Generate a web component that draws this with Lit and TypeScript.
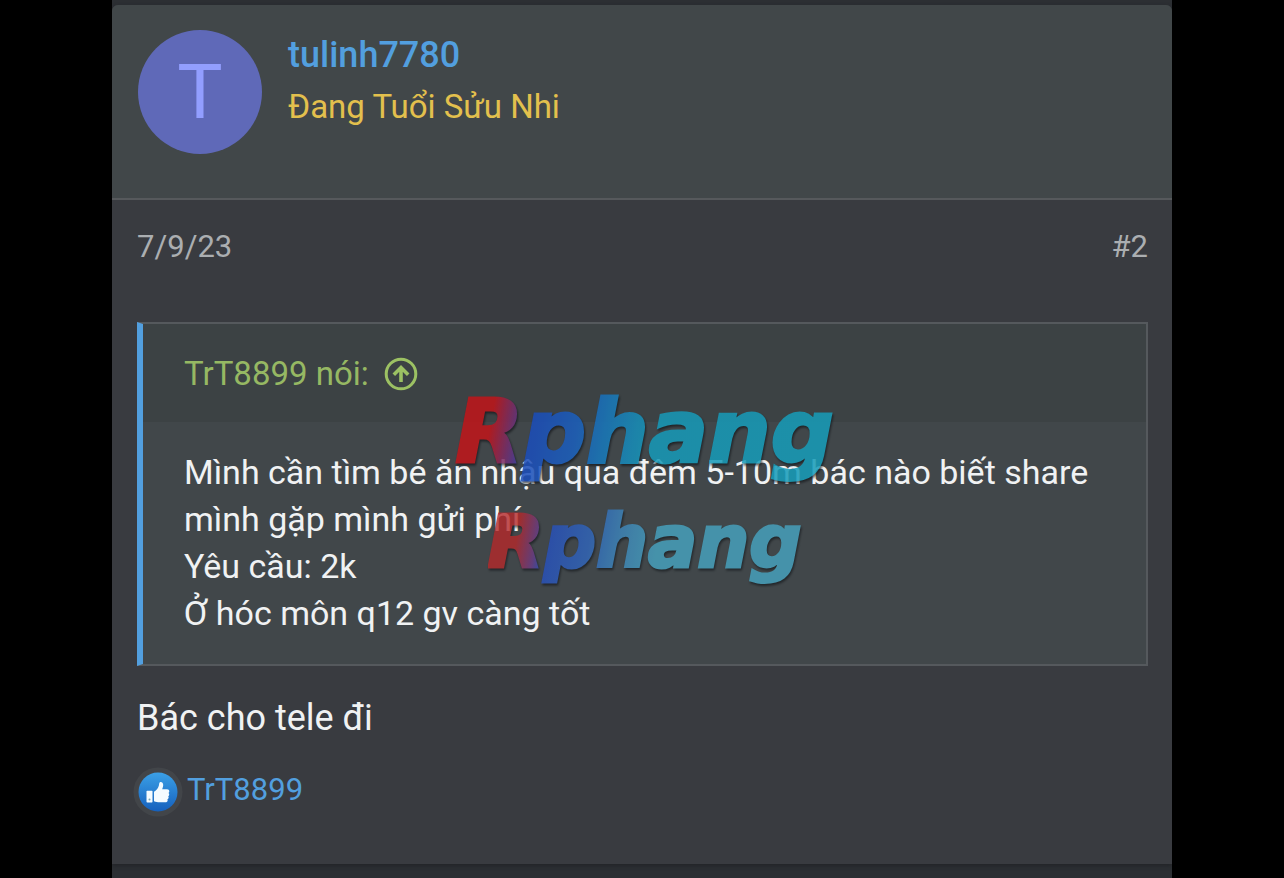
import { LitElement, html, css } from "lit";
import { customElement, property } from "lit/decorators.js";

@customElement("like-badge")
class LikeBadge extends LitElement {
  static styles = css`
    :host {
      display: block;
      width: 50px;
      height: 50px;
      flex: none;
    }
    .icon {
      display: block;
      width: 100%;
      height: 100%;
    }
  `;

  render() {
    return html`
      <svg class="icon" viewBox="0 0 50 50" role="img" aria-label="Like">
        <defs>
          <linearGradient id="fill" x1="0" y1="0" x2="0" y2="1">
            <stop offset="0" stop-color="#3ba0e6" />
            <stop offset="1" stop-color="#1560bd" />
          </linearGradient>
        </defs>
        <circle cx="25" cy="25" r="24.5" fill="#424549" />
        <circle cx="25" cy="25" r="19.5" fill="url(#fill)" />
        <path
          fill="#f4fbff"
          d="M14.2 23.8h4.6c.4 0 .7.3.7.7v10.2c0 .4-.3.7-.7.7h-4.6c-.4 0-.7-.3-.7-.7V24.5c0-.4.3-.7.7-.7z"
        />
        <path
          fill="#f4fbff"
          d="M21 24.8c2.600-1.500 4.300-3.600 4.900-6.200.3-1.500.2-3.100 1.400-3.500 1.400-.4 2.900.9 2.900 3 0 1.500-.6 2.900-1 4.100h4.900c1.300 0 2.200.9 2.200 2 0 .8-.3 1.400-.8 1.800.6.4.8 1 .7 1.700-.1.700-.5 1.200-1 1.500.4.500.5 1 .4 1.600-.1.700-.6 1.200-1.200 1.500.3.500.3 1 .2 1.500-.3 1-1.200 1.500-2.400 1.500h-5.700c-2 0-3.500-.3-5.500-1z"
        />
        <circle cx="16.5" cy="32.6" r="1" fill="#7ba7b5" />
      </svg>
    `;
  }
}

@customElement("brand-mark")
class BrandMark extends LitElement {
  @property({ reflect: true }) size = "large";

  static styles = css`
    :host {
      display: block;
      filter: drop-shadow(1px 2px 1px rgba(15, 18, 22, 0.75));
      opacity: 0.86;
    }
    :host([size="small"]) {
      opacity: 0.8;
    }
    .word {
      display: block;
      font: italic bold 88px/110px "DejaVu Sans", sans-serif;
      color: transparent;
      -webkit-text-stroke: 3px transparent;
      background: linear-gradient(
        100deg,
        #c0151a 0%,
        #c0151a 11%,
        #5c3585 18%,
        #1b4cba 21%,
        #1b60bd 33%,
        #1878bb 40%,
        #1799b8 52%,
        #179db9 100%
      );
      -webkit-background-clip: text;
      background-clip: text;
    }
    :host([size="small"]) .word {
      font-size: 73px;
      line-height: 92px;
      background-image: linear-gradient(
        100deg,
        #b5292a 0%,
        #b5292a 11%,
        #6a3c86 17%,
        #2750bf 20%,
        #3066bd 33%,
        #3d86bd 42%,
        #47a5c2 54%,
        #47a5c2 100%
      );
    }
  `;

  render() {
    return html`<span class="word">Rphang</span>`;
  }
}

@customElement("quote-block")
class QuoteBlock extends LitElement {
  @property() author = "";
  @property({ attribute: false }) lines: string[] = [];

  static styles = css`
    :host {
      display: block;
    }
    .quote {
      position: relative;
      margin: 0;
      border: 2px solid #55595d;
      border-left: 6px solid #529fdf;
      background: #41474a;
    }
    .head {
      display: flex;
      align-items: center;
      padding: 26px 41px 24px;
      background: #3c4244;
      color: #96b863;
      font-size: 33px;
      line-height: 48px;
    }
    .source {
      display: flex;
      align-items: center;
      gap: 15px;
      color: inherit;
      text-decoration: none;
    }
    .arrow {
      display: block;
      width: 34px;
      height: 34px;
    }
    .body {
      padding: 27px 41px;
      color: #f0f2f3;
      font-size: 34px;
      line-height: 47px;
    }
    .line {
      margin: 0;
    }
    .marks {
      position: absolute;
      inset: 0;
      display: flex;
      flex-direction: column;
      align-items: center;
      gap: 9px;
      padding-top: 53px;
      pointer-events: none;
    }
  `;

  render() {
    return html`
      <blockquote class="quote">
        <div class="head">
          <a class="source" href="#post-1">
            <span>${this.author} nói:</span>
            <svg class="arrow" viewBox="0 0 34 34" fill="none" stroke="#9cc163" aria-hidden="true">
              <circle cx="17" cy="17" r="14.8" stroke-width="3" />
              <path d="M17 25V11M9.800 17.700L17 10.500l7.200 7.200" stroke-width="3.6" />
            </svg>
          </a>
        </div>
        <div class="body">
          ${this.lines.map((line) => html`<p class="line">${line}</p>`)}
        </div>
        <div class="marks">
          <brand-mark size="large"></brand-mark>
          <brand-mark size="small"></brand-mark>
        </div>
      </blockquote>
    `;
  }
}

@customElement("app-root")
class AppRoot extends LitElement {
  private quoted = [
    "Mình cần tìm bé ăn nhậu qua đêm 5-10m bác nào biết share mình gặp mình gửi phí",
    "Yêu cầu: 2k",
    "Ở hóc môn q12 gv càng tốt",
  ];

  static styles = css`
    :host {
      display: block;
      min-height: 100vh;
      background: #000;
      font-family: Roboto, "Noto Sans", sans-serif;
    }
    .page {
      box-sizing: border-box;
      max-width: 1060px;
      min-height: 100vh;
      margin: 0 auto;
      padding: 5px 0 14px;
      overflow: hidden;
      background: #2c2f33;
    }
    .post {
      border-radius: 6px 6px 0 0;
      overflow: hidden;
      background: #393b40;
      box-shadow: 0 2px 4px #222428;
    }
    .user {
      display: flex;
      gap: 26px;
      padding: 25px 26px 44px;
      border-bottom: 2px solid #56595c;
      background: #414749;
    }
    .avatar {
      flex: none;
      display: grid;
      place-items: center;
      width: 124px;
      height: 124px;
      border-radius: 50%;
      background: #5f69b8;
      color: #929eff;
      font-size: 76px;
      line-height: 124px;
      text-decoration: none;
    }
    .name,
    .rank {
      margin: 0;
      line-height: 51px;
    }
    .name {
      font-size: 36px;
      font-weight: 500;
    }
    .rank {
      color: #e3c04d;
      font-size: 33px;
    }
    .link {
      color: #529fdf;
      text-decoration: none;
    }
    .content {
      padding: 23px 24px 47px 25px;
    }
    .meta {
      display: flex;
      justify-content: space-between;
      margin-bottom: 51px;
      color: #abaeb1;
      font-size: 31px;
      line-height: 48px;
    }
    .number {
      color: inherit;
      text-decoration: none;
    }
    .reply {
      margin: 28px 0 25px;
      color: #f0f2f3;
      font-size: 36px;
      line-height: 48px;
    }
    .reactions {
      display: flex;
      gap: 4px;
      margin-left: -4px;
      font-size: 31px;
      line-height: 46px;
    }
  `;

  render() {
    return html`
      <main class="page">
        <article class="post">
          <header class="user">
            <a class="avatar" href="#member" aria-label="tulinh7780">T</a>
            <div>
              <h1 class="name"><a class="link" href="#member">tulinh7780</a></h1>
              <p class="rank">Đang Tuổi Sửu Nhi</p>
            </div>
          </header>
          <div class="content">
            <div class="meta">
              <time datetime="2023-09-07">7/9/23</time>
              <a class="number" href="#post-2">#2</a>
            </div>
            <quote-block author="TrT8899" .lines=${this.quoted}></quote-block>
            <p class="reply">Bác cho tele đi</p>
            <div class="reactions">
              <like-badge></like-badge>
              <a class="link" href="#reactions">TrT8899</a>
            </div>
          </div>
        </article>
      </main>
    `;
  }
}
